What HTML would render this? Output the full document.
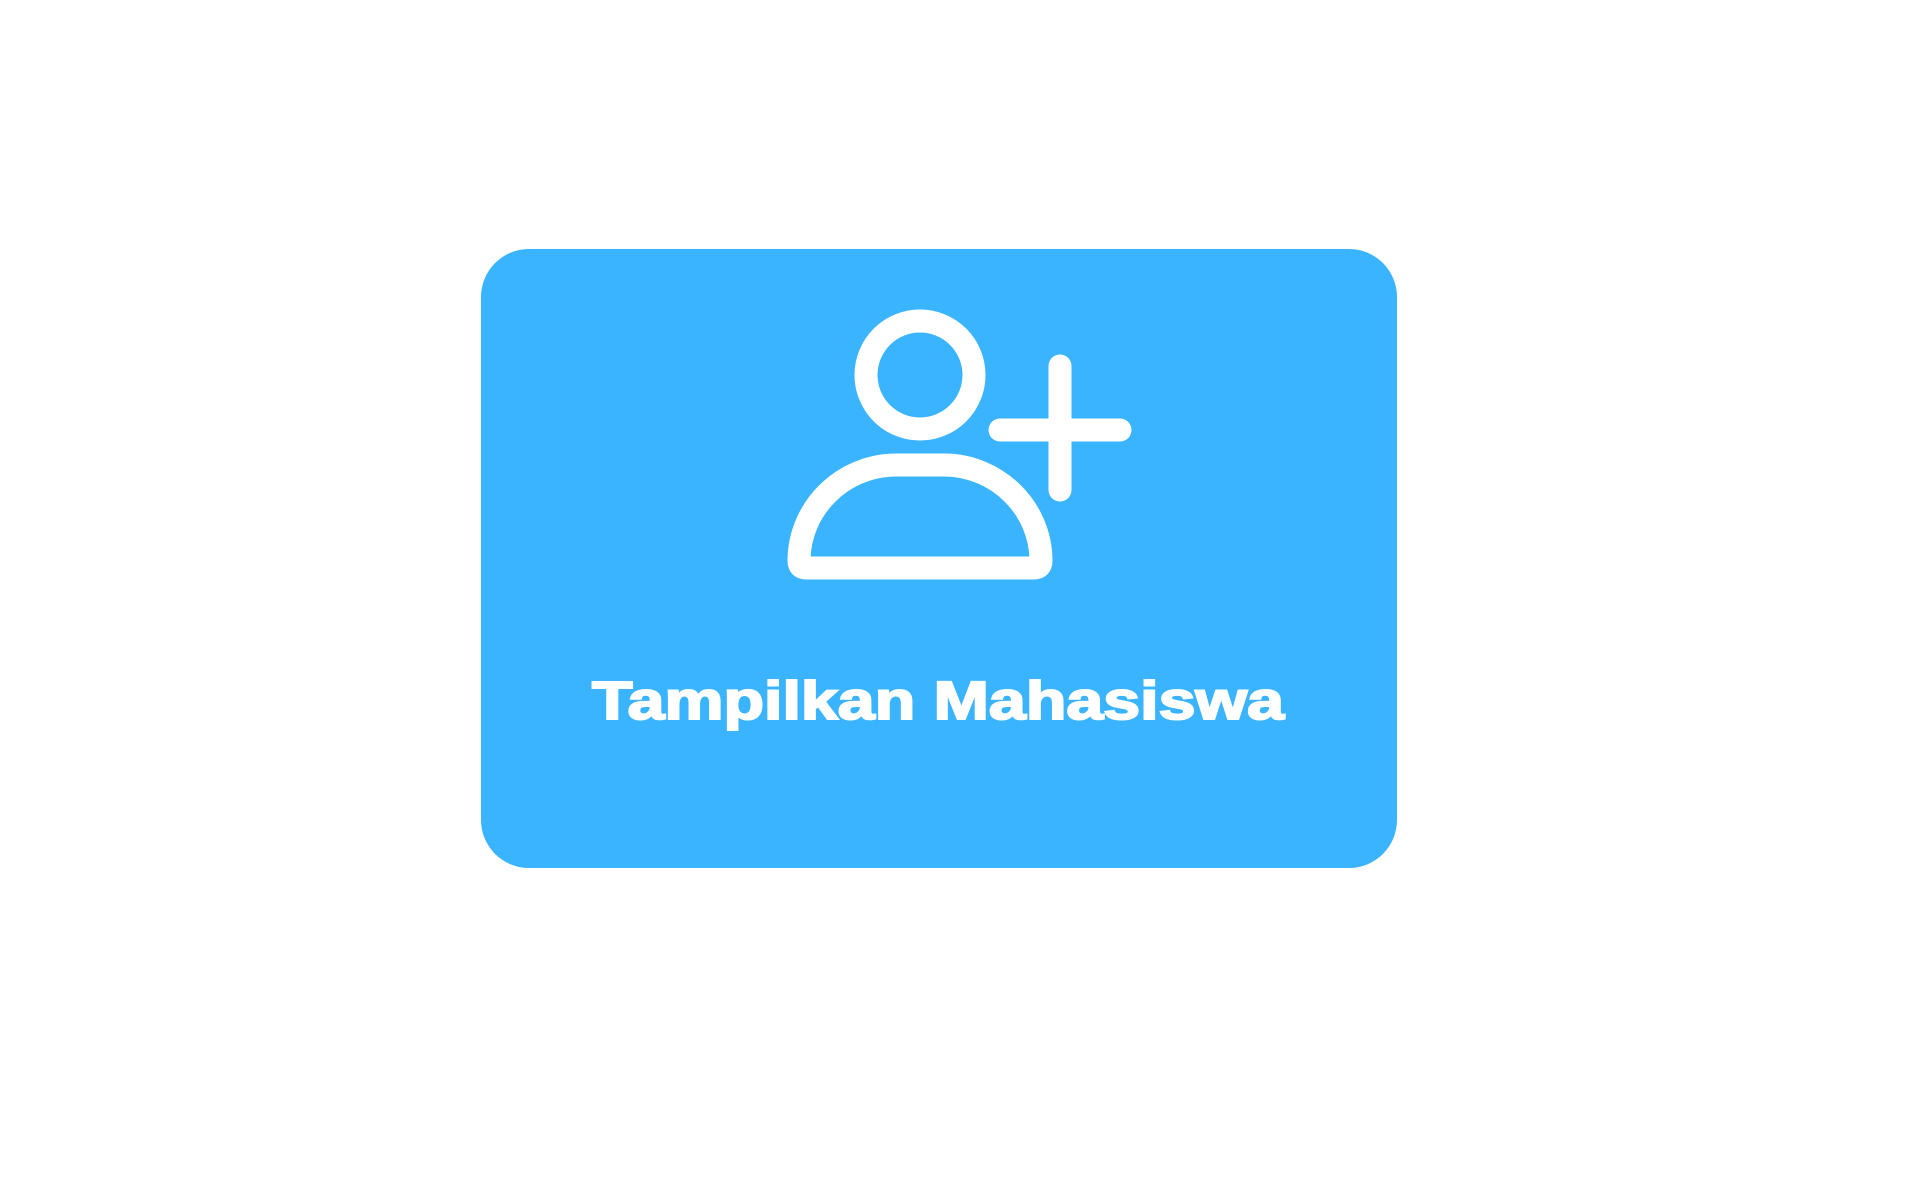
<!DOCTYPE html>
<html><head><meta charset="utf-8"><style>
html,body{margin:0;padding:0;background:#fff;width:1920px;height:1200px;overflow:hidden}
</style></head><body>
<svg width="1920" height="1200" viewBox="0 0 1920 1200" xmlns="http://www.w3.org/2000/svg">
<rect x="481" y="249" width="916" height="619" rx="48" fill="#3bb4ff"/>
<g fill="none" stroke="#fff" stroke-width="23" stroke-linecap="round" stroke-linejoin="round">
<circle cx="920" cy="375" r="54"/>
<path d="M799 561 C799 508 843 465 896 465 L944 465 C997 465 1041 508 1041 561 Q1041 568 1034 568 L806 568 Q799 568 799 561 Z"/>
<path d="M1060 366 V490 M1000 430 H1120"/>
</g>
<text x="592" y="719" font-family="Liberation Sans, Arial, sans-serif" font-weight="900" font-size="54" fill="#fff" stroke="#fff" stroke-width="2" textLength="692" lengthAdjust="spacingAndGlyphs">Tampilkan Mahasiswa</text>
</svg>
</body></html>
